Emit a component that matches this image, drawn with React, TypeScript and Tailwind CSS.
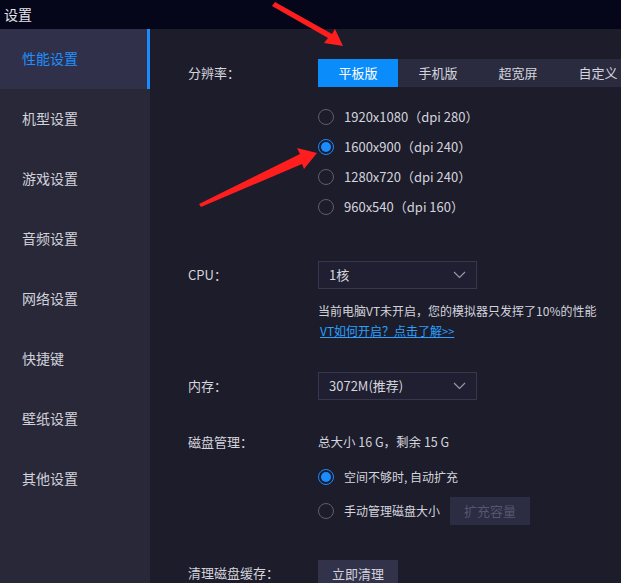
import React from "react";

const font = { fontFamily: '"Noto Sans CJK SC", "Noto Sans", sans-serif' };

function Radio({ checked }: { checked?: boolean }) {
  return checked ? (
    <span className="flex h-[16px] w-[16px] shrink-0 items-center justify-center rounded-full border-[1.5px] border-[#1a8cff]">
      <span className="h-[10px] w-[10px] rounded-full bg-[#1a8cff]" />
    </span>
  ) : (
    <span className="h-[16px] w-[16px] shrink-0 rounded-full border-[1.5px] border-[#5e5e70]" />
  );
}

function Chevron() {
  return (
    <svg width="13" height="8" viewBox="0 0 13 8" className="text-[#9a9ab0]">
      <path d="M1 1 L6.5 6.5 L12 1" fill="none" stroke="currentColor" strokeWidth="1.1" />
    </svg>
  );
}

function Select({ value }: { value: string }) {
  return (
    <div className="flex h-[28px] w-[159px] shrink-0 items-center justify-between border border-[#36364c] bg-[#1f1f31] pl-[10px] pr-[10px] text-[13px] text-[#d6d6de]">
      <span>{value}</span>
      <Chevron />
    </div>
  );
}

const sideItems = ["性能设置", "机型设置", "游戏设置", "音频设置", "网络设置", "快捷键", "壁纸设置", "其他设置"];

export default function App() {
  return (
    <div className="relative h-[583px] w-[621px] overflow-hidden bg-[#1c1c2b]" style={font}>
      <div className="flex h-[29px] items-center bg-[#06061a] pl-[4px] text-[14px] text-[#e4e4ea]">设置</div>
      <div className="flex h-[554px]">
        <div className="flex w-[150px] shrink-0 flex-col bg-[#282839]">
          {sideItems.map((s, i) => (
            <div
              key={s}
              className={
                i === 0
                  ? "flex h-[60px] items-center border-r-[3px] border-[#1a8cff] bg-[#30304a] pb-[2px] pl-[22px] text-[14px] text-[#1e90ff]"
                  : "flex h-[60px] items-center pb-[2px] pl-[22px] text-[14px] text-[#d2d2da]"
              }
            >
              {s}
            </div>
          ))}
        </div>
        <div className="min-w-0 flex-1 pl-[38px] pt-[30px] text-[13px] text-[#d4d4dc]">
          <div className="flex items-center">
            <div className="w-[130px] shrink-0">分辨率：</div>
            <div className="flex h-[28px]">
              {["平板版", "手机版", "超宽屏", "自定义"].map((t, i) => (
                <div
                  key={t}
                  className={
                    i === 0
                      ? "flex w-[80px] shrink-0 items-center justify-center bg-[#0b8cfb] text-white"
                      : "flex w-[80px] shrink-0 items-center justify-center bg-[#2b2b40] text-[#d4d4dc]"
                  }
                >
                  {t}
                </div>
              ))}
            </div>
          </div>
          <div className="ml-[130px] mt-[15px] flex flex-col">
            {["1920x1080（dpi 280）", "1600x900（dpi 240）", "1280x720（dpi 240）", "960x540（dpi 160）"].map((r, i) => (
              <div key={r} className="flex h-[30px] items-center gap-[10px]">
                <Radio checked={i === 1} />
                <span>{r}</span>
              </div>
            ))}
          </div>
          <div className="mt-[39px] flex items-center">
            <div className="w-[130px] shrink-0">CPU：</div>
            <Select value="1核" />
          </div>
          <div className="ml-[130px] mt-[12px] whitespace-nowrap text-[12px] leading-[20px]">
            <div>当前电脑VT未开启，您的模拟器只发挥了10%的性能</div>
            <div className="ml-[2px] text-[#2aa0ff] underline">
              VT如何开启？点击了解<span className="text-[11px]">&gt;&gt;</span>
            </div>
          </div>
          <div className="mt-[31px] flex items-center">
            <div className="w-[130px] shrink-0">内存：</div>
            <Select value="3072M(推荐)" />
          </div>
          <div className="mt-[32px] flex h-[20px] items-center">
            <div className="w-[130px] shrink-0">磁盘管理：</div>
            <div className="text-[12.5px]">总大小 16 G，剩余 15 G</div>
          </div>
          <div className="ml-[130px] mt-[11px] flex flex-col gap-[6px] text-[12px]">
            <div className="flex h-[28px] items-center gap-[10px]">
              <Radio checked />
              <span>空间不够时, 自动扩充</span>
            </div>
            <div className="flex h-[28px] items-center gap-[10px]">
              <Radio />
              <span>手动管理磁盘大小</span>
              <div className="flex h-[28px] w-[80px] shrink-0 items-center justify-center bg-[#2c2c42] text-[13px] text-[#565670]">扩充容量</div>
            </div>
          </div>
          <div className="mt-[35px] flex items-start">
            <div className="w-[130px] shrink-0 pt-[3px]">清理磁盘缓存：</div>
            <div className="flex h-[28px] w-[80px] shrink-0 items-center justify-center bg-[#32324a] text-[#d4d4dc]">立即清理</div>
          </div>
        </div>
      </div>
      <svg className="pointer-events-none absolute left-0 top-0" width="621" height="583">
        <path d="M272 6 L275 2 L332 34 L335 29 L343 46 L324 43 L328 38 Z" fill="#ff1e1e" />
        <path d="M199 204 L201 207 L302 164 L304 169 L317 153 L297 148 L300 154 Z" fill="#ff1e1e" />
      </svg>
    </div>
  );
}
